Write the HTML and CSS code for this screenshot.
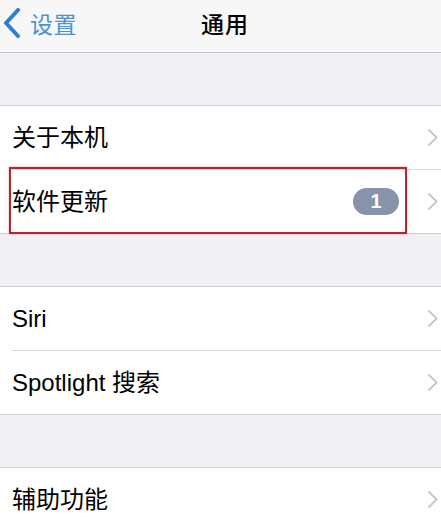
FILE: index.html
```html
<!DOCTYPE html>
<html lang="zh">
<head>
<meta charset="utf-8">
<link rel="stylesheet" href="styles.css">
</head>
<body>
<div class="screen">
  <header class="nav">
    <div class="back">
      <svg class="back-icon" width="20" height="30" viewBox="0 0 20 30"><polyline points="16,2 4,15 16,28" fill="none" stroke="#2a7fd4" stroke-width="4" stroke-linejoin="round" stroke-linecap="round"/></svg>
      <span class="back-text">设置</span>
    </div>
    <div class="title">通用</div>
  </header>

  <div class="gap"></div>

  <section class="group">
    <div class="row"><span class="label">关于本机</span><svg class="chev" width="11" height="19" viewBox="0 0 11 19"><polyline points="1.5,1.5 9.5,9.5 1.5,17.5" fill="none" stroke="#c7c7cc" stroke-width="2"/></svg></div>
    <div class="sep"></div>
    <div class="row highlight"><span class="label">软件更新</span><span class="badge">1</span><svg class="chev" width="11" height="19" viewBox="0 0 11 19"><polyline points="1.5,1.5 9.5,9.5 1.5,17.5" fill="none" stroke="#c7c7cc" stroke-width="2"/></svg><div class="mark"></div></div>
  </section>

  <div class="gap"></div>

  <section class="group">
    <div class="row"><span class="label">Siri</span><svg class="chev" width="11" height="19" viewBox="0 0 11 19"><polyline points="1.5,1.5 9.5,9.5 1.5,17.5" fill="none" stroke="#c7c7cc" stroke-width="2"/></svg></div>
    <div class="sep"></div>
    <div class="row"><span class="label">Spotlight 搜索</span><svg class="chev" width="11" height="19" viewBox="0 0 11 19"><polyline points="1.5,1.5 9.5,9.5 1.5,17.5" fill="none" stroke="#c7c7cc" stroke-width="2"/></svg></div>
  </section>

  <div class="gap"></div>

  <section class="group">
    <div class="row"><span class="label">辅助功能</span><svg class="chev" width="11" height="19" viewBox="0 0 11 19"><polyline points="1.5,1.5 9.5,9.5 1.5,17.5" fill="none" stroke="#c7c7cc" stroke-width="2"/></svg></div>
  </section>
</div>
</body>
</html>
```
FILE: styles.css
```css
html, body {
  margin: 0;
  padding: 0;
  background: #efeff4;
}
body {
  font-family: "Liberation Sans", "Noto Sans CJK SC", sans-serif;
  color: #000;
  overflow: hidden;
}
.screen {
  width: 441px;
  height: 517px;
  display: flex;
  flex-direction: column;
  overflow: hidden;
}
.nav {
  height: 52px;
  flex: none;
  background: #f7f7f8;
  border-bottom: 1px solid #c4c4c8;
  position: relative;
  display: flex;
  align-items: center;
  justify-content: center;
}
.back {
  position: absolute;
  left: 2px;
  top: 6px;
  display: flex;
  align-items: center;
  gap: 8px;
}
.back-text {
  font-size: 23px;
  color: #4a92d2;
  letter-spacing: 0.5px;
}
.title {
  font-size: 23px;
  font-weight: 500;
  letter-spacing: 1px;
  margin-top: -7px;
  margin-left: 9px;
}
.gap {
  height: 52px;
  flex: none;
}
.group {
  background: #fff;
  border-top: 1px solid #cfcfd3;
  border-bottom: 1px solid #cfcfd3;
  flex: none;
}
.row {
  height: 63px;
  display: flex;
  align-items: center;
  padding: 0 3px 0 12px;
  position: relative;
}
.label {
  flex: 1;
  font-size: 24px;
  line-height: 1;
}
.sep {
  height: 1px;
  margin-left: 12px;
  background: #d6d6da;
}
.chev {
  flex: none;
}
.badge {
  flex: none;
  width: 46px;
  height: 27px;
  border-radius: 14px;
  background: #8793ab;
  color: #fff;
  font-weight: 700;
  font-size: 20px;
  display: flex;
  align-items: center;
  justify-content: center;
  margin-right: 28px;
}
.mark {
  position: absolute;
  left: 9px;
  top: -3px;
  width: 394px;
  bottom: -1px;
  border: 2px solid #b0282b;
  box-shadow: 0 0 2px rgba(220, 60, 60, 0.5);
  pointer-events: none;
}
```
